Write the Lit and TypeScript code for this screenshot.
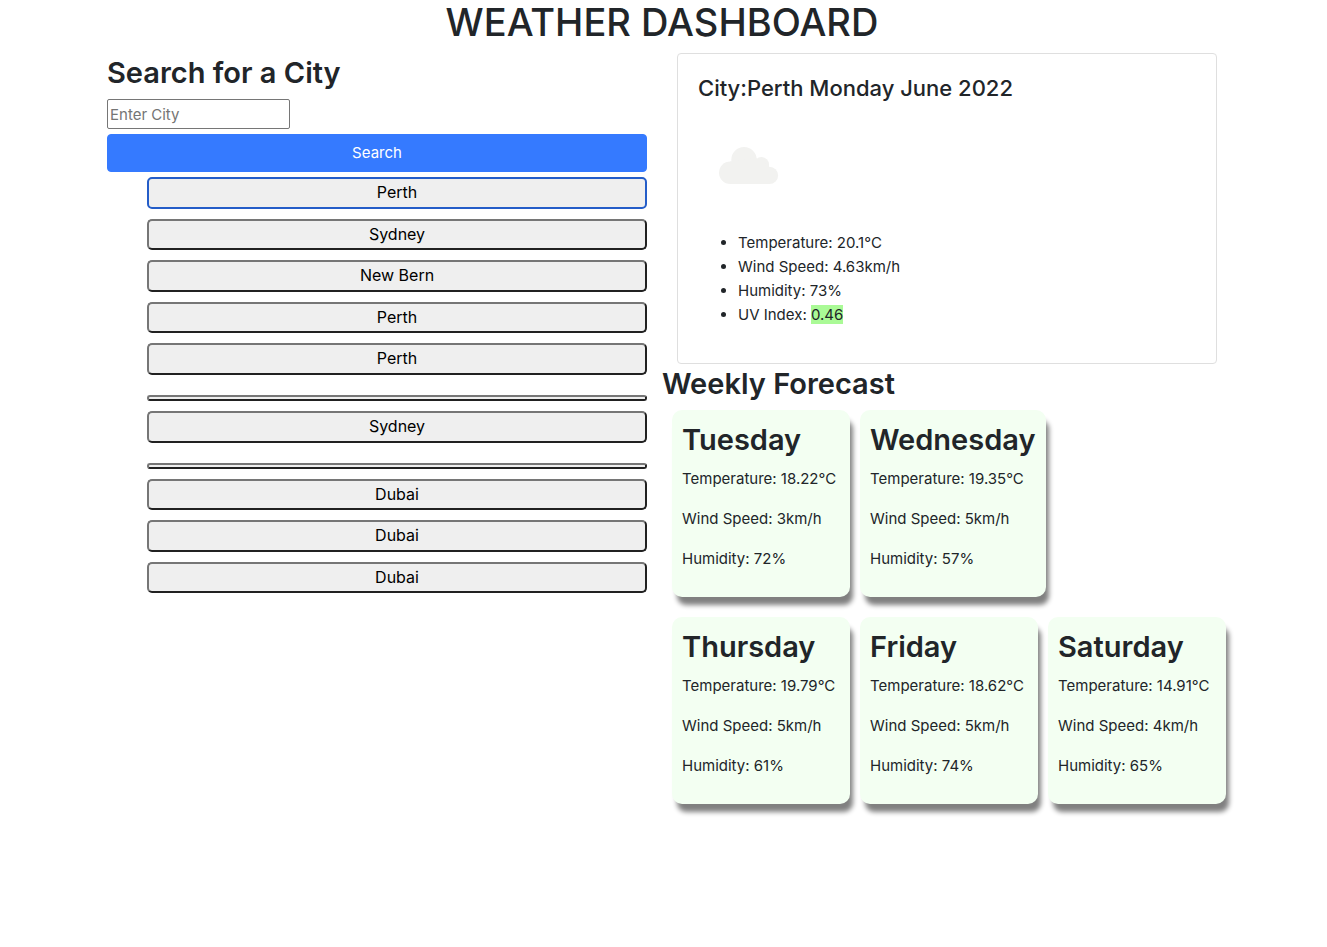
import { LitElement, html, css } from "lit";
import { customElement, state } from "lit/decorators.js";

interface Forecast {
  day: string;
  temp: string;
  wind: string;
  humidity: string;
}

@customElement("forecast-card")
class ForecastCard extends LitElement {
  static properties = { forecast: { attribute: false } };
  declare forecast: Forecast;

  static styles = css`
    :host {
      display: block;
      box-sizing: border-box;
      min-width: 178px;
      padding: 10px;
      border-radius: 10px;
      background: #f3fff2;
      box-shadow: 4px 9px 5px -1px #808080;
      white-space: nowrap;
    }
    .day {
      margin: 0 0 7px;
      font-size: 29px;
      line-height: 40px;
      font-weight: 600;
    }
    .line {
      margin: 0 0 16px;
    }
  `;

  render() {
    const f = this.forecast;
    return html`
      <h2 class="day">${f.day}</h2>
      <p class="line">Temperature: ${f.temp}°C</p>
      <p class="line">Wind Speed: ${f.wind}km/h</p>
      <p class="line">Humidity: ${f.humidity}%</p>
    `;
  }
}

@customElement("app-root")
class AppRoot extends LitElement {
  @state() private history = [
    "Perth", "Sydney", "New Bern", "Perth", "Perth", "",
    "Sydney", "", "Dubai", "Dubai", "Dubai",
  ];

  @state() private week: Forecast[] = [
    { day: "Tuesday", temp: "18.22", wind: "3", humidity: "72" },
    { day: "Wednesday", temp: "19.35", wind: "5", humidity: "57" },
    { day: "Thursday", temp: "19.79", wind: "5", humidity: "61" },
    { day: "Friday", temp: "18.62", wind: "5", humidity: "74" },
    { day: "Saturday", temp: "14.91", wind: "4", humidity: "65" },
  ];

  static styles = css`
    * {
      box-sizing: border-box;
    }
    :host {
      display: block;
      box-sizing: border-box;
      min-height: 100vh;
      padding: 0 3px 20px 0;
      background: #fff;
      color: #212529;
      font-family: Inter, "Liberation Sans", sans-serif;
      font-size: 15px;
      line-height: 24px;
    }
    .title {
      margin: 0 0 8px;
      font-size: 38px;
      line-height: 45px;
      font-weight: 500;
      text-align: center;
    }
    .container {
      display: grid;
      grid-template-columns: minmax(0, 1fr) minmax(0, 1fr);
      max-width: 1140px;
      margin: 0 auto;
    }
    .search,
    .today {
      padding: 0 15px;
    }
    .heading {
      margin: 0 0 6px;
      font-size: 29px;
      line-height: 40px;
      font-weight: 600;
    }
    .field {
      display: block;
      width: 183px;
      height: 30px;
      padding: 1px 2px;
      border: 1px solid #767676;
      border-radius: 2px;
      background: #fff;
      color: inherit;
      font: inherit;
    }
    .field::placeholder {
      color: #757575;
    }
    .submit {
      display: block;
      width: 100%;
      margin: 5px 0;
      padding: 6px 12px;
      border: 1px solid #357aff;
      border-radius: 4px;
      background: #357aff;
      color: #fff;
      font: inherit;
    }
    .history {
      display: flex;
      flex-direction: column;
      gap: 10px;
      margin: 0;
      padding: 0 0 0 40px;
      list-style: none;
    }
    .city {
      display: block;
      width: 100%;
      padding: 1px 6px;
      border: 2px solid;
      border-color: #767676 #212121 #212121 #767676;
      border-radius: 5px;
      background: #efefef;
      color: #000;
      font-family: inherit;
      font-size: 16px;
      line-height: 1.6;
    }
    .city.current {
      border-color: #245dc8;
    }
    .city.blank {
      margin-top: 10px;
    }
    .card {
      padding: 20px;
      border: 1px solid #dfdfdf;
      border-radius: 4px;
    }
    .card-title {
      margin: 0 0 12px;
      font-size: 22px;
      line-height: 29px;
      font-weight: 500;
    }
    .icon {
      display: block;
      width: 100px;
      height: 100px;
      margin-bottom: 16px;
    }
    .facts {
      margin: 0 0 16px;
      padding-left: 40px;
    }
    .uv {
      background: #aafa96;
    }
    .cards {
      display: flex;
      flex-wrap: wrap;
      gap: 20px 10px;
      padding-left: 10px;
    }
  `;

  render() {
    return html`
      <h1 class="title">WEATHER DASHBOARD</h1>
      <main class="container">
        <section class="search">
          <h2 class="heading"><label for="city">Search for a City</label></h2>
          <input class="field" id="city" type="text" placeholder="Enter City" />
          <button class="submit" type="button">Search</button>
          <ul class="history">
            ${this.history.map(
              (name, i) => html`<li>
                <button
                  type="button"
                  class="city ${i === 0 ? "current" : ""} ${name ? "" : "blank"}"
                >${name}</button>
              </li>`
            )}
          </ul>
        </section>
        <div>
          <section class="today">
            <div class="card">
              <h5 class="card-title">City:Perth Monday June 2022</h5>
              <svg class="icon" viewBox="0 0 100 100" role="img" aria-label="Cloudy">
                <g fill="#f2f2f0">
                  <circle cx="32.3" cy="57.7" r="11.3" />
                  <circle cx="46" cy="44.7" r="12.7" />
                  <circle cx="63.5" cy="49.5" r="7.5" />
                  <circle cx="71.5" cy="60.4" r="8.6" />
                  <path d="M32 46.4L40 46L58 43L71 50L71.5 69H32.3Z" />
                </g>
              </svg>
              <ul class="facts">
                <li>Temperature: 20.1°C</li>
                <li>Wind Speed: 4.63km/h</li>
                <li>Humidity: 73%</li>
                <li>UV Index: <span class="uv">0.46</span></li>
              </ul>
            </div>
          </section>
          <section>
            <h2 class="heading">Weekly Forecast</h2>
            <div class="cards">
              ${this.week.map(
                (f) => html`<forecast-card .forecast=${f}></forecast-card>`
              )}
            </div>
          </section>
        </div>
      </main>
    `;
  }
}
